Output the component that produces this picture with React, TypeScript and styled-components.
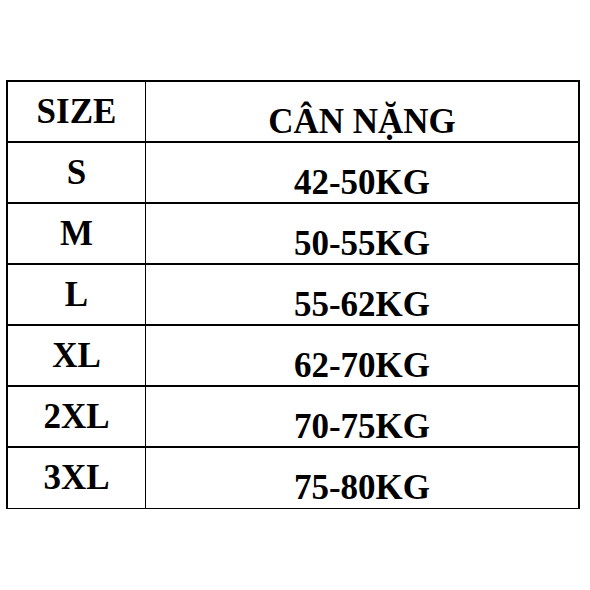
import React from 'react';
import styled, { createGlobalStyle } from 'styled-components';

const GlobalStyle = createGlobalStyle`
  html, body {
    margin: 0;
    padding: 0;
    background: #ffffff;
  }
  body {
    font-family: 'Liberation Serif', 'Times New Roman', serif;
  }
`;

const Page = styled.div`
  width: 590px;
  height: 590px;
  padding: 80px 0 0 6px;
  box-sizing: border-box;
`;

const Table = styled.table`
  width: 574px;
  border-collapse: collapse;
  table-layout: fixed;
  font-family: 'Liberation Serif', 'Times New Roman', serif;
  border-top: 2px solid #000;
  border-left: 2px solid #000;
  border-right: 2px solid #000;
  border-bottom: 1px solid #000;
`;

const Row = styled.tr`
  height: 61px;
  & + & {
    border-top: 2px solid #000;
  }
`;

const SizeCell = styled.td`
  width: 137px;
  padding: 0;
  border-right: 1px solid #000;
  text-align: center;
  vertical-align: middle;
  font-family: 'Liberation Serif', 'Times New Roman', serif;
  font-size: 35px;
  font-weight: 700;
  line-height: 1;
  color: #000;
`;

const WeightCell = styled.td`
  padding: 20px 0 0 0;
  text-align: center;
  vertical-align: middle;
  font-family: 'Liberation Serif', 'Times New Roman', serif;
  font-size: 35px;
  font-weight: 700;
  line-height: 1;
  color: #000;
`;

const rows = [
  { size: 'S', weight: '42-50KG' },
  { size: 'M', weight: '50-55KG' },
  { size: 'L', weight: '55-62KG' },
  { size: 'XL', weight: '62-70KG' },
  { size: '2XL', weight: '70-75KG' },
  { size: '3XL', weight: '75-80KG' },
];

const App = () => {
  return (
    <>
      <GlobalStyle />
      <Page>
        <Table>
          <tbody>
            <Row>
              <SizeCell>SIZE</SizeCell>
              <WeightCell>CÂN NẶNG</WeightCell>
            </Row>
            {rows.map((r) => (
              <Row key={r.size}>
                <SizeCell>{r.size}</SizeCell>
                <WeightCell>{r.weight}</WeightCell>
              </Row>
            ))}
          </tbody>
        </Table>
      </Page>
    </>
  );
};

export default App;
